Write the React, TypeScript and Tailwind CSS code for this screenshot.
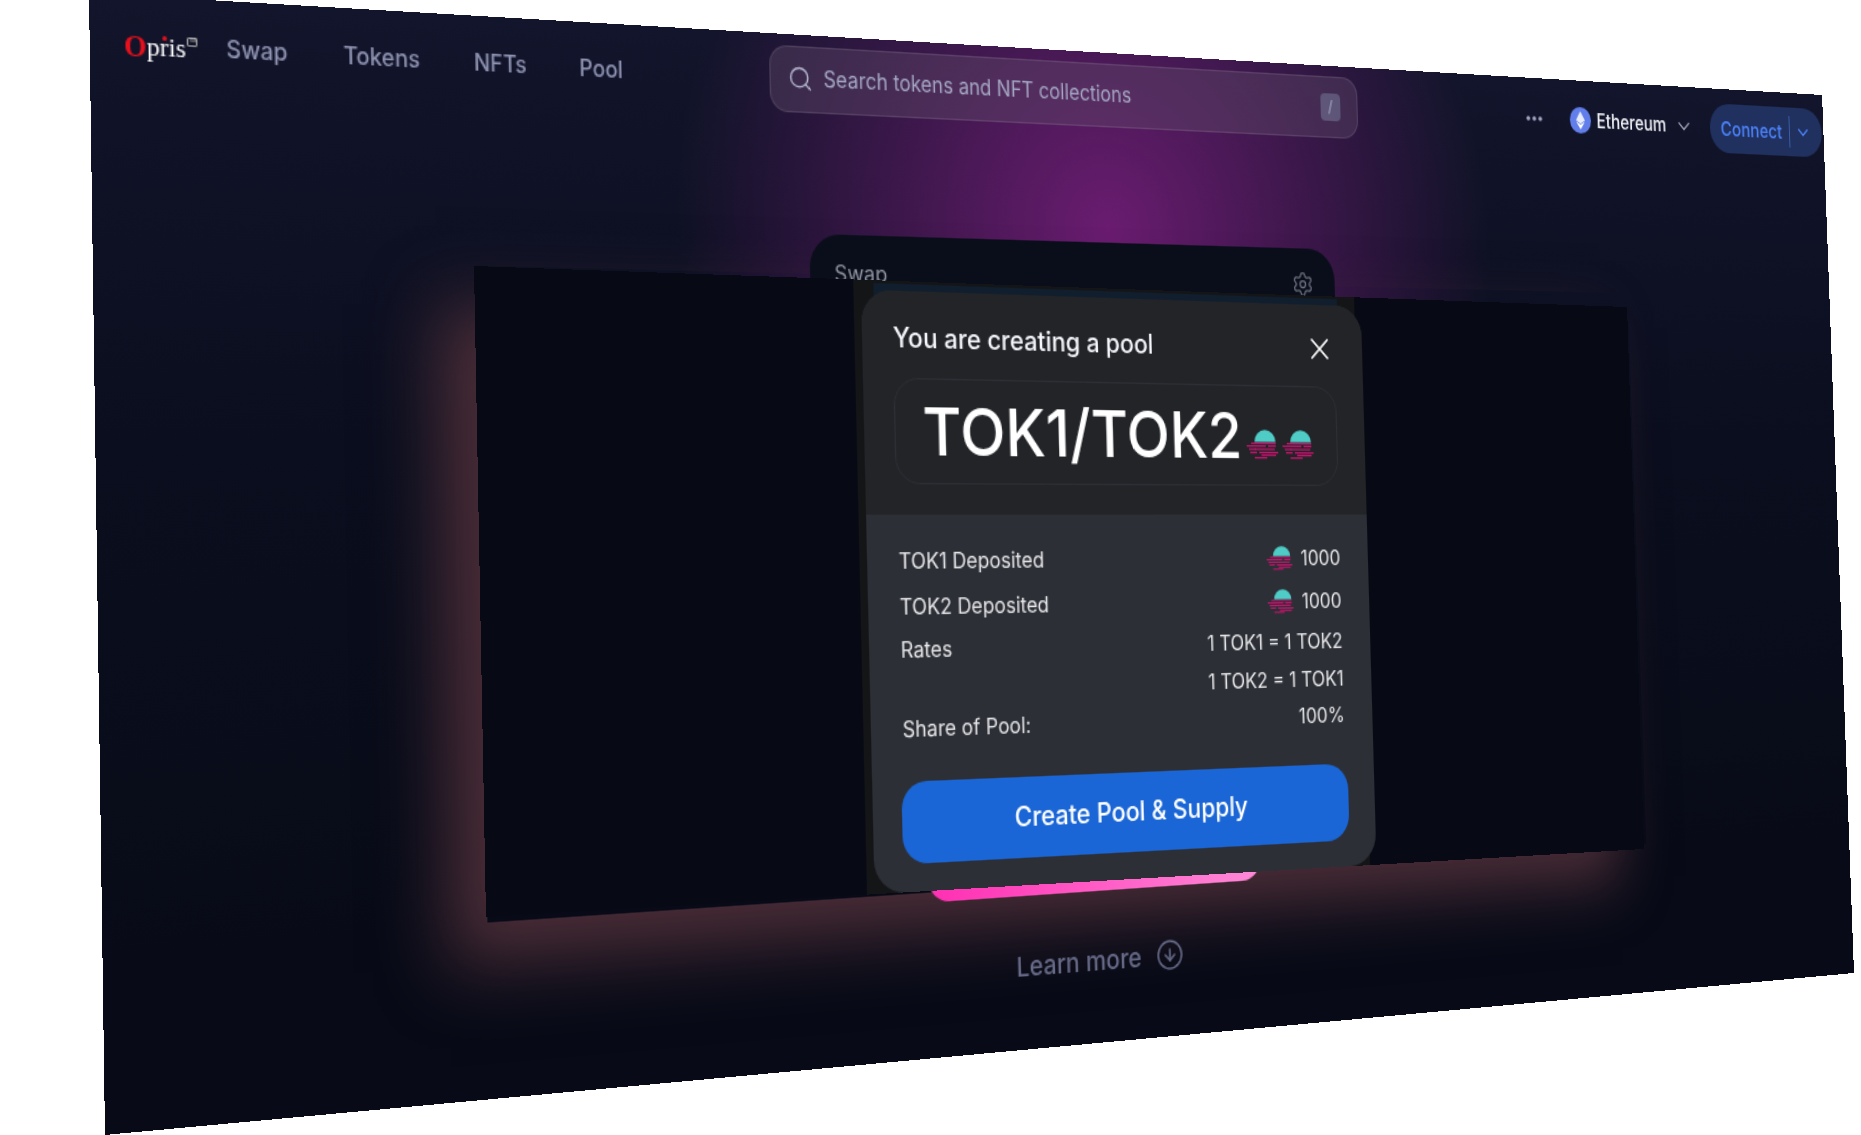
import { CircleArrowDown, ChevronDown, MoreHorizontal, Search, Settings, X } from "lucide-react";

function quadMatrix(W: number, H: number, p: number[][]) {
  const [[x0, y0], [x1, y1], [x2, y2], [x3, y3]] = p;
  const dx1 = x1 - x2, dx2 = x3 - x2, sx = x0 - x1 + x2 - x3;
  const dy1 = y1 - y2, dy2 = y3 - y2, sy = y0 - y1 + y2 - y3;
  const det = dx1 * dy2 - dx2 * dy1;
  const g = (sx * dy2 - dx2 * sy) / det;
  const h = (dx1 * sy - sx * dy1) / det;
  const a = x1 - x0 + g * x1, b = x3 - x0 + h * x3;
  const d = y1 - y0 + g * y1, e = y3 - y0 + h * y3;
  return `matrix3d(${a / W},${d / W},0,${g / W},${b / H},${e / H},0,${h / H},0,0,1,0,${x0},${y0},0,1)`;
}
const pageTransform = quadMatrix(1440, 720, [[89, -7], [1822, 95], [1854, 973], [105, 1135]]);
const dialogTransform = quadMatrix(973, 440, [[474, 266], [1627, 307], [1644, 849], [486, 917]]);

function Sun({ className }: { className: string }) {
  const stripes = [
    [4, 10, 22], [0, 12, 17], [19, 12, 7], [2, 14.5, 6], [7, 14.5, 18], [11, 17, 17], [3, 17, 6], [13, 19, 13], [7, 21, 11],
  ];
  return (
    <svg viewBox="0 0 28 23" className={className}>
      <path d="M7 9.4a9.4 9.2 0 0 1 18.8 0z" fill="#4fccc6" />
      {stripes.map(([x, y, w], i) => (
        <rect key={i} x={x} y={y} width={w} height="1.2" fill="#c7146f" />
      ))}
    </svg>
  );
}

function Row({ label, children, className = "" }: { label: string; children: React.ReactNode; className?: string }) {
  return (
    <div className={`flex items-center justify-between h-[24px] pl-[25px] pr-[25px] text-[15.7px] text-[#e6e7ea] ${className}`}>
      <span>{label}</span>
      {children}
    </div>
  );
}

export default function App() {
  return (
    <div className="relative w-[1861px] h-[1135px] overflow-hidden bg-white font-['Inter',sans-serif]">
      <div
        className="absolute left-0 top-0 w-[1440px] h-[720px] origin-top-left overflow-hidden bg-[linear-gradient(180deg,#12152b_0%,#0b0e1e_40%,#080b17_85%)]"
        style={{ transform: pageTransform }}
      >
        <div className="absolute inset-0 bg-[radial-gradient(circle_345px_at_750px_130px,#6a1c70_0%,#6a1c7000_100%)]" />
        <div className="absolute left-[257px] top-[168px] w-[973px] h-[436px] shadow-[-27px_27px_44px_#4a2d37]" />

        <header className="relative flex items-center h-[62px]">
          <div className="flex items-center w-[478px] pl-[22px]">
            <div className="relative flex items-start w-[67px] mt-[3px] font-['Liberation_Serif',serif] text-[17px] leading-none text-white">
              <span className="font-bold text-[19px] leading-[17px] text-[#e8101c]">O</span>
              <span className="relative">
                pris
                <span className="absolute left-[10px] top-[1.5px] w-[3px] h-[3px] rounded-full bg-[#e8101c]" />
              </span>
              <span className="flex items-center justify-center ml-[1px] mt-[1px] w-[7px] h-[6px] border-[0.5px] border-[#9a9a9a] rounded-[1px] font-['Inter',sans-serif] text-[3.5px] leading-none text-[#bdbdbd]">
                TM
              </span>
            </div>
            <nav className="flex items-center gap-[38px] mt-[2px] text-[15.4px] font-medium text-[#8f93b1]">
              <span>Swap</span>
              <span>Tokens</span>
              <span>NFTs</span>
              <span>Pool</span>
            </nav>
          </div>

          <div className="relative flex items-center w-[497px] h-[47px] pl-[13px] pr-[15px] rounded-[14px] border border-white/10 bg-[#5e4a68]/40 text-[15.4px] text-[#a5a8c4]">
            <Search size={20} strokeWidth={1.6} className="text-[#b2b5cd]" />
            <span className="ml-[8px]">Search tokens and NFT collections</span>
            <span className="ml-auto flex items-center justify-center w-[18px] h-[21px] rounded-[4px] bg-[#6b6a8a]/70 text-[12px] text-[#a5a8c4]">
              /
            </span>
          </div>

          <div className="flex items-center flex-1 justify-end pr-[2px] mt-[1px]">
            <MoreHorizontal size={20} strokeWidth={2.4} className="mr-[25px] text-[#a5a8c4]" />
            <svg viewBox="0 0 20 20" className="w-[21px] h-[21px] mr-[6px]">
              <circle cx="10" cy="10" r="10" fill="#627eea" />
              <path d="M10 3l-4.2 7L10 12.5l4.2-2.5z" fill="#fff" opacity=".85" />
              <path d="M10 13.4l-4.2-2.5L10 17l4.2-6.1z" fill="#fff" />
            </svg>
            <span className="text-[15.4px] font-medium text-[#f2f3f8]">Ethereum</span>
            <ChevronDown size={20} strokeWidth={1.6} className="ml-[8px] mr-[17px] text-[#9a9db0]" />
            <div className="flex items-center w-[118px] h-[40px] rounded-[20px] bg-[#20315f] pl-[11px] text-[16px] font-medium text-[#4c82fb]">
              <span>Connect</span>
              <span className="ml-[7px] w-px h-[26px] bg-[#3a5ea8]" />
              <ChevronDown size={18} strokeWidth={1.8} className="ml-[5px]" />
            </div>
          </div>
        </header>

        <main className="relative flex flex-col items-center w-[443px] ml-[506px] mt-[77.5px]">
          <section className="w-full h-[399px] rounded-[24px] bg-[#0a0e1a] px-[19px] pt-[15px]">
            <div className="flex items-center justify-between h-[24px] text-[16px] text-[#8e919e]">
              <span>Swap</span>
              <Settings size={20} strokeWidth={1.5} className="text-[#6d7080]" />
            </div>
          </section>
          <div className="w-[279px] h-[72.5px] rounded-b-[16px] bg-[linear-gradient(90deg,#ff2fb3,#ff8ad8)]" />
          <div className="flex items-center gap-[12px] mt-[35.5px] text-[19.2px] font-medium text-[#666a87]">
            <span>Learn more</span>
            <CircleArrowDown size={24} strokeWidth={1.5} />
          </div>
        </main>
      </div>

      <div
        className="absolute left-0 top-0 w-[973px] h-[440px] origin-top-left bg-[#070914]"
        style={{ transform: dialogTransform }}
      >
        <div className="absolute left-[282px] top-0 w-[427px] h-full bg-[#131517]">
          <div className="ml-[16px] mt-[1.5px] w-[395px] h-[40px] bg-[#101e2e]" />
        </div>
        <div className="absolute left-[288px] top-[6.7px] flex flex-col w-[426.6px] h-[433px] rounded-[24px] overflow-hidden bg-[#2d2f36] text-white">
          <div className="h-[162px] shrink-0 bg-[#222428]">
            <div className="flex items-center justify-between h-[24px] mt-[23px] pl-[24.5px] pr-[24.5px]">
              <span className="text-[19.7px] font-medium text-[#f5f6fc]">You are creating a pool</span>
              <X size={28} strokeWidth={1.5} className="-mt-[1px]" />
            </div>
            <div className="flex items-center mt-[16.5px] ml-[24px] mr-[25px] h-[76.5px] pt-[2px] pl-[21.5px] rounded-[20px] border border-[#2d2f36]">
              <span className="text-[48.5px] leading-none font-medium">TOK1/TOK2</span>
              <span className="flex items-end gap-[3.5px] ml-[4.5px] mt-[13px]">
                <Sun className="w-[28px] h-[23px]" />
                <Sun className="w-[28px] h-[23px]" />
              </span>
            </div>
          </div>
          <div className="flex flex-col flex-1 pt-[21.8px]">
            <Row label="TOK1 Deposited">
              <span className="flex items-center gap-[8px]">
                <Sun className="w-[23px] h-[19px]" />
                1000
              </span>
            </Row>
            <Row label="TOK2 Deposited" className="mt-[9px]">
              <span className="flex items-center gap-[8px]">
                <Sun className="w-[23px] h-[19px]" />
                1000
              </span>
            </Row>
            <Row label="Rates" className="mt-[7px]">
              <span>1 TOK1 = 1 TOK2</span>
            </Row>
            <div className="flex justify-end items-center h-[24px] mt-[5px] pr-[25px] text-[15.7px] text-[#e6e7ea]">
              1 TOK2 = 1 TOK1
            </div>
            <Row label="Share of Pool:" className="mt-[4px]">
              <span>100%</span>
            </Row>
            <button className="ml-[23px] mr-[23.5px] mt-[25.6px] h-[59px] rounded-[20px] bg-[#1a66d6] text-[19.8px] font-medium text-white">
              Create Pool &amp; Supply
            </button>
          </div>
        </div>
      </div>
    </div>
  );
}
